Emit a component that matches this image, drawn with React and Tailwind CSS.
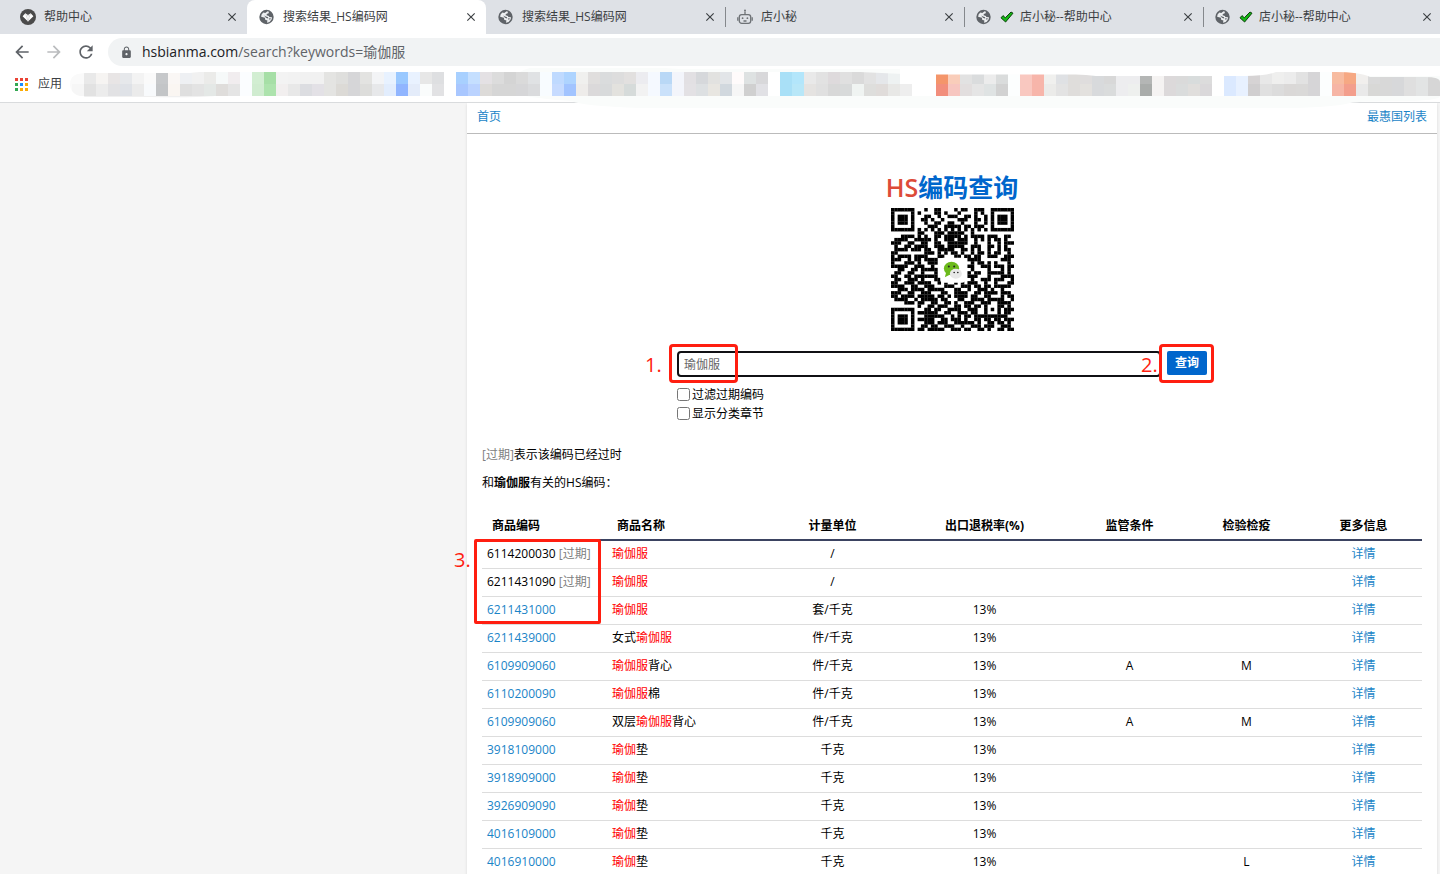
import React, { useState } from "react";
import {
  MdArrowBack,
  MdArrowForward,
  MdClose,
  MdLock,
  MdRefresh,
} from "react-icons/md";

const tabs = [
  { id: 1, icon: "help", title: "帮助中心" },
  { id: 2, icon: "globe", title: "搜索结果_HS编码网", active: true },
  { id: 3, icon: "globe", title: "搜索结果_HS编码网" },
  { id: 4, icon: "robot", title: "店小秘", divider: true },
  { id: 5, icon: "globe", title: "店小秘--帮助中心", divider: true, done: true },
  { id: 6, icon: "globe", title: "店小秘--帮助中心", divider: true, done: true },
];

const columns = [
  { label: "商品编码", w: "w-[125px]", align: "text-left" },
  { label: "商品名称", w: "w-[160px]", align: "text-left" },
  { label: "计量单位", w: "w-[131px]", align: "text-center" },
  { label: "出口退税率(%)", w: "w-[173px]", align: "text-center" },
  { label: "监管条件", w: "w-[117px]", align: "text-center" },
  { label: "检验检疫", w: "w-[117px]", align: "text-center" },
  { label: "更多信息", w: "w-[117px]", align: "text-center" },
];

// name is [before, highlighted, after]
const rows = [
  { code: "6114200030", expired: true, name: ["", "瑜伽服", ""], unit: "/" },
  { code: "6211431090", expired: true, name: ["", "瑜伽服", ""], unit: "/" },
  { code: "6211431000", name: ["", "瑜伽服", ""], unit: "套/千克", rate: "13%" },
  { code: "6211439000", name: ["女式", "瑜伽服", ""], unit: "件/千克", rate: "13%" },
  { code: "6109909060", name: ["", "瑜伽服", "背心"], unit: "件/千克", rate: "13%", control: "A", inspect: "M" },
  { code: "6110200090", name: ["", "瑜伽服", "棉"], unit: "件/千克", rate: "13%" },
  { code: "6109909060", name: ["双层", "瑜伽服", "背心"], unit: "件/千克", rate: "13%", control: "A", inspect: "M" },
  { code: "3918109000", name: ["", "瑜伽", "垫"], unit: "千克", rate: "13%" },
  { code: "3918909000", name: ["", "瑜伽", "垫"], unit: "千克", rate: "13%" },
  { code: "3926909090", name: ["", "瑜伽", "垫"], unit: "千克", rate: "13%" },
  { code: "4016109000", name: ["", "瑜伽", "垫"], unit: "千克", rate: "13%" },
  { code: "4016910000", name: ["", "瑜伽", "垫"], unit: "千克", rate: "13%", inspect: "L" },
];

// pixelated bookmarks, one "top bottom" pair per 12px column
const mosaic =
  "fafafa f6f6f6,e9e9e9 e2e2e2,f6f4f2 ececec,e8e5e5 e2e2e4,e6e8eb dfe2e7,f3f3f3 ebebeb,fafafa f8fafc,c6c8ca c3c5c7,faf7f5 faf6f2,eef0f3 dfdfdf,f1f1f1 e3e3e3,ebebe9 e4e8e6,f6f9f9 dfdddb,f1edef e5e5e5,fbfdff fbfdff,d2eed2 d0ecd0,a6dfa6 ade3ad,f3f3f3 f2efef,f2f2f2 e8e8e8,f1f1f1 dcdde1,f1f1f1 e3e1e6,e4e4e2 e4e4e2,dfdfdd dcdad6,d6d6d8 d6d6d8,e3e3e1 dddddb,f3f4f6 e7e8ea,e8f2ff e2edfd,99c8ff 90b5ff,e9f2ff e4ecfa,e7e7e7 fafcfc,dedfe1 e2e2e4,ffffff ffffff,a8d0ff a9c7ff,c5dfff bbd3ff,e4e1e4 dddbd9,dcdcdc d6d6d6,d4d4d4 d6d6d6,dadada d6d6d8,e0e2e4 dadbdd,f8fcff f8fcff,bfdaff c6dbff,aed4ff a2c4ff,f0f0ee eeecea,e0dedd dbd9da,dadcdd d8dadb,dddddd e3e2de,e2e0df d6dbda,ececf0 f2f2f2,f5f9ff f5f9ff,b9d8f6 cae1fa,f3f5fb f3f5fb,e2e0e3 e3e1e4,d6d8db dde0e2,e2e2e0 e8e6e1,e2e5e8 d1d8de,fffbfb f6f6f6,dee2e2 d0d0d0,d8d8da e1e1e5,ffffff ffffff,a9e0f7 a9e0f7,b3e6fb b8e7f8,e9e9e9 e5e3e1,e2e2e2 e0e0e0,dedadc d8d8d8,e0e0e0 d8dada,dadada f0f4f2,e2e2e2 dededc,e5e7ea e0dcda,eef2f2 e8e8e6,ffffff eeeeee,ffffff ffffff,ffffff ffffff,f4956a f28e7c,f9cdba f7c6c0,e2e2e2 e2dede,dadcdd e5e5e5,ececec dfe3e3,dadcdc d2d2d2,fcfefe fcfefe,f9c8c0 f9c8c0,f7b5aa f7b5aa,f0f0ee ebebe9,dfe1e4 e3e3e3,dfdddb dfdddb,dfdddd e3e1de,d8dadc d8dadc,d8d8d8 dadcdc,ededef ededef,ededef eef0ee,b4b6b5 a9acaa,f5f3f2 f5f3f2,dcd9da dcd9da,dadada dadcdc,d8dcdc e0dedc,dcdcdc dad8da,ffffff ffffff,dbe9ff dbe9ff,e8f1ff e8f1ff,d6d3d4 d0cecf,e8e8e8 e0e0e0,efefee dcdcdc,ececec dad8d7,e2e2e2 dad9d8,d6d5d7 d6d5d7,fcfefe fcfefe,f7bba0 f6b5a5,f6a883 f39e8c,f1efed e9e9e9,dadada d8d8d6,d8d8d8 d8d8d8,d7d8da d7d8da,dfdfdf dfdfdf,e2e4e4 e2e4e4,d6d6d6 d6d6d6"
    .split(",")
    .map((pair) => pair.split(" "));

const qrRows = [
  "1111111000100110000101100111001111111",
  "1000001010000110100010000101001000001",
  "1011101000110010011100110100101011101",
  "1011101001101001000011100110101011101",
  "1011101000100110011001000100101011101",
  "1000001000011100111110110111001000001",
  "1111111010101010101010101010101111111",
  "0000000011000111011111001000000000000",
  "0001111010100110111110101111011100110",
  "0111100111110100111011100101010110100",
  "1110011001100110011111100100010010111",
  "0100110111100111011111001110011010100",
  "0111101110110011111001101010010010110",
  "1100000000111010101101001011010110010",
  "1011110111100011000110110110011100111",
  "1110010110111100000000011110000001110",
  "1000111010011100000000001011010100010",
  "1111100111001000000000011001110111011",
  "0011001101111100000000001000010001010",
  "0110011001000100000000010110011111010",
  "1100110111111100000000011100010001111",
  "0110011101000110000000001001110111001",
  "1100111011110010100101011100100100011",
  "1111001100111000111001110110110111110",
  "0011101111011111000110010011101001000",
  "1110011001110001100111100110111101110",
  "1101111011111011010111101100110001011",
  "0111100101111101100011001111011111001",
  "0000111011001100110100111001110011110",
  "0000000010011011100110110110100011010",
  "1111111000110110011110011100101010111",
  "1000001011111100110011101100100010110",
  "1011101000111111001010110111111111100",
  "1011101011111001101110100110110110111",
  "1011101000111011100111111010011011010",
  "1000001001101100111001001110111001110",
  "1111111011011111001110110011010011011",
];

const HelpIcon = () => (
  <svg viewBox="0 0 16 16" className="h-4 w-4">
    <circle cx="8" cy="8" r="8" fill="#4a4a4a" />
    <path d="M2.6 7.2 5.3 4.2 8 6l2.7-1.8 2.7 3L8 12.6z" fill="#fff" />
    <path d="m5.3 4.2 1.4 3.4 1.3-1.6m2.7-1.8L9.3 7.6 8 6M6.7 7.6 8 12.4l1.3-4.8" fill="none" stroke="#bbb" strokeWidth="0.5" />
  </svg>
);

const GlobeIcon = () => (
  <svg viewBox="0 0 16 16" className="h-4 w-4">
    <circle cx="7.5" cy="8" r="7.200" fill="#5f6368" />
    <path
      d="M8.600 2.300 9.900 2.700 9.700 4.300 7.800 4.900 7.600 6.200 9.900 6.900 10.300 8.100 13 8.300 12.700 10.300 10.600 12.900 8 13.800 8.400 11.600 6.200 10.800 5.900 8.800 2.100 7.700 2.600 5.600 4.300 3.500 6.300 3.900z"
      fill="#eceef0"
    />
    <path d="M5.200 6.400 7 7.400 9.200 8.200 8.800 9.400 6.900 8.700zM9.600 9.600l2.300-.3-.9 1.800z" fill="#5f6368" />
  </svg>
);

const RobotIcon = () => (
  <svg viewBox="0 0 16 16" className="h-4 w-4" fill="none" stroke="#6e7276" strokeWidth="1.3">
    <rect x="2.3" y="5.7" width="11.4" height="8.6" rx="2.4" />
    <path d="M8 5.5V2.5M.8 8.2v3.6M15.2 8.2v3.6M6.5 12h3" />
    <circle cx="8" cy="1.6" r="1" fill="#6e7276" stroke="none" />
    <circle cx="5.6" cy="9.2" r=".9" fill="#6e7276" stroke="none" />
    <circle cx="10.4" cy="9.2" r=".9" fill="#6e7276" stroke="none" />
  </svg>
);

const CheckIcon = () => (
  <svg viewBox="0 0 14 12" className="h-3 w-3.5 shrink-0">
    <path d="m1 6.800 2-2.200 2.300 2.200L11 1l2 1.200L5.600 11z" fill="#14b814" stroke="#0b3d0b" strokeWidth="1" />
  </svg>
);

const AppsIcon = () => (
  <svg viewBox="0 0 13 13" className="h-[13px] w-[13px]">
    <path d="M0 0h3v3H0zM5 0h3v3H5zM10 0h3v3h-3z" fill="#ea4335" />
    <path d="M0 5h3v3H0zM0 10h3v3H0z" fill="#34a853" />
    <path d="M5 5h3v3H5z" fill="#1a8cff" />
    <path d="M10 5h3v3h-3zM5 10h3v3H5zM10 10h3v3h-3z" fill="#fbab05" />
  </svg>
);

const tabIcons = {
  help: <HelpIcon />,
  globe: <GlobeIcon />,
  robot: <RobotIcon />,
};

const Tab = ({ tab }) => (
  <div
    className={`relative flex h-full w-[239px] shrink-0 items-center pl-3 pr-2 ${
      tab.active ? "rounded-t-lg bg-white" : ""
    }`}
  >
    {tab.divider && <span className="absolute left-0 top-[7px] h-5 w-px bg-[#85888c]" />}
    <span className="flex w-6 shrink-0 items-center">{tabIcons[tab.icon]}</span>
    <span className="flex grow items-center gap-1.5 truncate">
      {tab.done && <CheckIcon />}
      {tab.title}
    </span>
    <button aria-label="关闭标签页" className="text-[#3c4043]">
      <MdClose size={14} />
    </button>
  </div>
);

const Bookmarks = () => (
  <div className="relative flex h-[33px] items-center border-b border-[#d9dbdd] pb-1 pl-[15px]">
    <AppsIcon />
    <a href="#apps" className="ml-2.5 text-xs text-[#3c4043]">应用</a>
    <svg className="absolute -top-0.5 left-[70px] h-10 w-[1370px]" viewBox="70 68 1370 40">
      <defs>
        <clipPath id="smear">
          <path d="M70 84Q70 73 86 73H190Q200 71 240 72H860L914 74.500H1070Q1084 74 1096 76H1245Q1265 76 1276 72H1335Q1360 72 1370 77H1425Q1440 77 1440 82V96H216Q190 98 150 97H86Q70 96 70 84Z" />
        </clipPath>
      </defs>
      <path d="M520 72Q530 65 560 66Q640 66 680 69H900V76H1440V96Q1440 101 1400 101Q1360 101 1350 103Q1330 108 1280 108H640Q580 106 572 101Q540 99 520 95Z" fill="#fafcfb" />
      <g clipPath="url(#smear)">
        <rect x="70" y="72" width="2" height="26" fill="#fafafa" />
        {mosaic.map(([top, bottom], i) => (
          <g key={i}>
            <rect x={72 + i * 12} y="72" width="12" height="12" fill={`#${top}`} />
            <rect x={72 + i * 12} y="84" width="12" height="12" fill={`#${bottom}`} />
          </g>
        ))}
        <rect x="84" y="96" width="130" height="2" fill="#f0f0f0" />
      </g>
    </svg>
  </div>
);

const Browser = () => (
  <header className="shrink-0 bg-white">
    <div className="flex h-[34px] overflow-hidden bg-[#dee1e6] pl-2 text-xs text-[#3c4043]">
      {tabs.map((tab) => (
        <Tab key={tab.id} tab={tab} />
      ))}
    </div>
    <div className="flex h-9 items-center pl-3">
      <button aria-label="后退" className="mr-3 text-[#5f6368]">
        <MdArrowBack size={20} />
      </button>
      <button aria-label="前进" className="mr-3 text-[#babcbe]">
        <MdArrowForward size={20} />
      </button>
      <button aria-label="刷新" className="mr-3 text-[#5f6368]">
        <MdRefresh size={20} />
      </button>
      <div className="flex h-7 grow items-center rounded-l-full bg-[#f1f3f4] pl-3">
        <MdLock size={13} className="mr-[9px] text-[#5f6368]" />
        <span className="text-sm text-[#5f6368]">
          <span className="text-[#202124]">hsbianma.com</span>/search?keywords=瑜伽服
        </span>
      </div>
    </div>
    <Bookmarks />
  </header>
);

const QrCode = () => (
  <svg viewBox="0 0 37 37" className="h-[123px] w-[123px]" role="img" aria-label="微信二维码">
    {qrRows.map((line, y) =>
      line.split("").map((bit, x) =>
        bit === "1" ? (
          <rect key={`${x}-${y}`} x={x} y={y} width="1.050" height="1.050" fill="#000" />
        ) : null
      )
    )}
    <rect x="14.800" y="15" width="7.500" height="7.500" rx="1" fill="#fff" />
    <ellipse cx="18.200" cy="18.200" rx="2.300" ry="2" fill="#6cba1c" />
    <path d="m16.600 19.300-.4 1.500 1.600-.8z" fill="#6cba1c" />
    <ellipse cx="19.500" cy="19.800" rx="1.800" ry="1.500" fill="#e8e8e8" />
    <g fill="#222">
      <circle cx="17.400" cy="17.600" r=".3" />
      <circle cx="19" cy="17.600" r=".3" />
      <circle cx="19" cy="19.400" r=".25" />
      <circle cx="20.100" cy="19.400" r=".25" />
    </g>
  </svg>
);

const SearchForm = () => {
  const [keywords, setKeywords] = useState("瑜伽服");

  return (
    <form className="mt-5 w-[550px]" onSubmit={(e) => e.preventDefault()}>
      <div className="flex items-start gap-1.5">
        <div className="relative">
          <input
            type="text"
            aria-label="关键词"
            value={keywords}
            onChange={(e) => setKeywords(e.target.value)}
            className="block h-[26px] w-[484px] rounded-sm border-2 border-[#101014] px-[5px] text-xs text-[#666] outline-none"
          />
          <span className="absolute -left-2 -top-[7px] h-[39px] w-[69px] rounded-sm border-3 border-[#ff1e10]" />
          <span className="absolute -left-8 top-0 text-xl leading-7 text-[#ff1e10]">1.</span>
        </div>
        <div className="relative">
          <button type="submit" className="block h-6 w-10 rounded-xs bg-[#0066cc] text-xs font-bold text-white">
            查询
          </button>
          <span className="absolute -left-2 -top-[7px] h-[39px] w-[55px] rounded-sm border-3 border-[#ff1e10]" />
          <span className="absolute -left-[26px] top-0 text-xl leading-7 text-[#ff1e10]">2.</span>
        </div>
      </div>
      <div className="mt-2 flex flex-col leading-[19px]">
        <label className="flex items-center gap-0.5">
          <input type="checkbox" className="h-[13px] w-[13px]" />
          过滤过期编码
        </label>
        <label className="flex items-center gap-0.5">
          <input type="checkbox" className="h-[13px] w-[13px]" />
          显示分类章节
        </label>
      </div>
    </form>
  );
};

const ResultTable = () => (
  <div className="relative mt-[15px]">
    <table className="w-full table-fixed border-collapse">
      <thead>
        <tr className="h-7 border-b-2 border-[#3b4361]">
          {columns.map((col) => (
            <th key={col.label} className={`${col.w} ${col.align} font-bold first:pl-2.5 nth-2:pl-2.5`}>
              {col.label}
            </th>
          ))}
        </tr>
      </thead>
      <tbody>
        {rows.map((row, index) => (
          <tr key={index} className="h-7 border-b border-[#dddddd] text-center">
            <td className="pl-[5px] text-left">
              {row.expired ? (
                <>
                  {row.code} <span className="text-[#808080]">[过期]</span>
                </>
              ) : (
                <a href="#code" className="text-[#1a84c7]">{row.code}</a>
              )}
            </td>
            <td className="pl-[5px] text-left">
              {row.name[0]}
              <span className="text-[#ff0000]">{row.name[1]}</span>
              {row.name[2]}
            </td>
            <td>{row.unit}</td>
            <td>{row.rate}</td>
            <td>{row.control}</td>
            <td>{row.inspect}</td>
            <td>
              <a href="#detail" className="text-[#1a84c7]">详情</a>
            </td>
          </tr>
        ))}
      </tbody>
    </table>
    <span className="absolute -left-2 top-[27px] h-[85px] w-[127px] rounded-xs border-3 border-[#ff1e10]" />
    <span className="absolute -left-7 top-[34px] text-xl leading-7 text-[#ff1e10]">3.</span>
  </div>
);

const App = () => {
  return (
    <div className="flex h-screen flex-col overflow-hidden bg-[#f5f5f5] font-['Open_Sans','Noto_Sans_CJK_SC',sans-serif] text-xs text-black">
      <Browser />
      <main className="flex grow justify-end pr-[3px]">
        <div className="w-[970px] bg-white shadow-sm">
          <nav className="flex h-[31px] items-center justify-between border-b border-[#bbbbbb] px-2.5 pb-0.5 text-[#1a84c7]">
            <a href="#home">首页</a>
            <a href="#list">最惠国列表</a>
          </nav>

          <div className="px-[15px]">
            {/* Logo + search */}
            <div className="flex flex-col items-center pt-[34px]">
              <h1 className="mb-0.5 text-[25px] font-semibold leading-[38px] text-[#0066cc]">
                <span className="text-[#dd4b39]">HS</span>编码查询
              </h1>
              <QrCode />
              <SearchForm />
            </div>

            {/* Notes */}
            <p className="mt-[18px] leading-7">
              <span className="text-[#808080]">[过期]</span>表示该编码已经过时
            </p>
            <p className="leading-7">
              和<b>瑜伽服</b>有关的HS编码：
            </p>

            <ResultTable />
          </div>
        </div>
      </main>
    </div>
  );
};

export default App;
